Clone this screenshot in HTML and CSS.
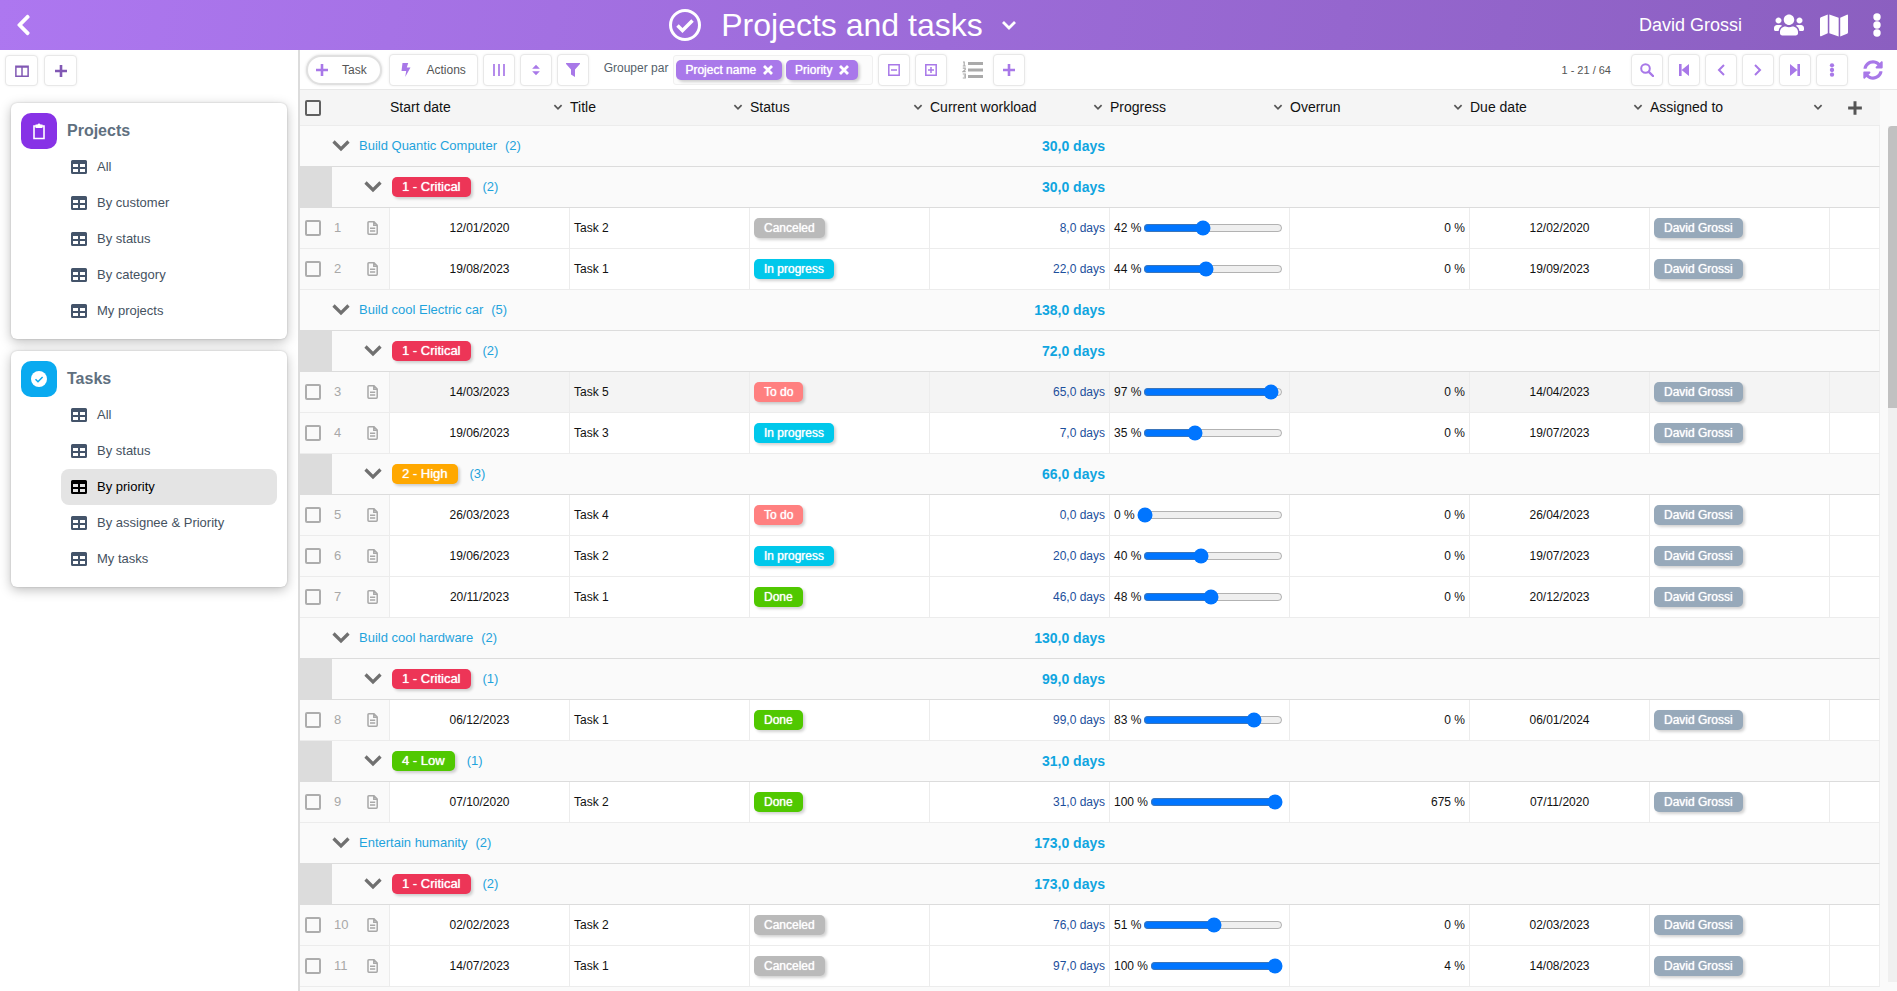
FILE: index.html
```html
<!DOCTYPE html>
<html lang="en">
<head>
<meta charset="utf-8">
<title>Projects and tasks</title>
<link rel="stylesheet" href="styles.css">
</head>
<body>
<svg class="sprite" aria-hidden="true">
  <symbol id="i-back" viewBox="0 0 320 512"><path d="M34.52 239.03L228.87 44.69c9.37-9.37 24.57-9.37 33.94 0l22.67 22.67c9.36 9.36 9.37 24.52.04 33.9L131.49 256l154.02 154.75c9.34 9.38 9.32 24.54-.04 33.9l-22.67 22.67c-9.37 9.37-24.57 9.37-33.94 0L34.52 272.97c-9.37-9.37-9.37-24.57 0-33.94z"/></symbol>
  <symbol id="i-check-circle" viewBox="0 0 32 32"><circle cx="16" cy="16" r="14.5" fill="none" stroke="currentColor" stroke-width="3"/><path d="M8.500 16.500l5 5L23.500 11.500" fill="none" stroke="currentColor" stroke-width="3.500"/></symbol>
  <symbol id="i-caret" viewBox="0 0 16 10"><path d="M2 2l6 6 6-6" fill="none" stroke="currentColor" stroke-width="2.800"/></symbol>
  <symbol id="i-users" viewBox="0 0 640 512"><path d="M96 224c35.300 0 64-28.700 64-64s-28.700-64-64-64-64 28.700-64 64 28.700 64 64 64zm448 0c35.300 0 64-28.700 64-64s-28.700-64-64-64-64 28.700-64 64 28.700 64 64 64zm32 32h-64c-17.600 0-33.500 7.100-45.100 18.600 40.300 22.100 68.900 62 75.100 109.400h66c17.700 0 32-14.300 32-32v-32c0-35.300-28.700-64-64-64zm-256 0c61.900 0 112-50.100 112-112S381.900 32 320 32 208 82.100 208 144s50.100 112 112 112zm76.800 32h-8.300c-20.800 10-43.900 16-68.500 16s-47.600-6-68.500-16h-8.300C179.600 288 128 339.600 128 403.200V432c0 26.500 21.500 48 48 48h288c26.500 0 48-21.500 48-48v-28.800c0-63.600-51.600-115.200-115.200-115.200zm-223.700-13.400C161.500 263.100 145.600 256 128 256H64c-35.300 0-64 28.700-64 64v32c0 17.700 14.300 32 32 32h65.900c6.300-47.400 34.900-87.300 75.200-109.400z"/></symbol>
  <symbol id="i-map" viewBox="0 0 576 512"><path d="M0 117.66v346.32c0 11.32 11.43 19.06 21.94 14.86L160 416V32L20.12 87.95A32 32 0 0 0 0 117.66zM192 416l192 64V96L192 32v384zM554.06 33.16L416 96v384l139.88-55.95A32 32 0 0 0 576 394.34V48.02c0-11.32-11.43-19.06-21.94-14.86z"/></symbol>
  <symbol id="i-dots" viewBox="0 0 8 24"><circle cx="4" cy="4" r="3.700"/><circle cx="4" cy="12" r="3.700"/><circle cx="4" cy="20" r="3.700"/></symbol>
  <symbol id="i-columns" viewBox="0 0 16 14"><path d="M1 1.500h14v11.500H1zM8 3v10M1 2.500h14" fill="none" stroke="currentColor" stroke-width="1.700"/></symbol>
  <symbol id="i-plus" viewBox="0 0 14 14"><path d="M7 1v12M1 7h12" fill="none" stroke="currentColor" stroke-width="2.600"/></symbol>
  <symbol id="i-clipboard" viewBox="0 0 14 18"><path d="M2 4h10v12.500H2z" fill="none" stroke="currentColor" stroke-width="1.600"/><path d="M3.500 6V2.500h2a1.600 1.600 0 0 1 3 0h2V6z"/></symbol>
  <symbol id="i-check-solid" viewBox="0 0 16 16"><circle cx="8" cy="8" r="8"/><path d="M4.500 8.200l2.500 2.500 4.600-4.800" fill="none" stroke="#0aaaf0" stroke-width="1.500"/></symbol>
  <symbol id="i-table" viewBox="0 0 16 14"><path fill-rule="evenodd" d="M1.500 0h13A1.500 1.500 0 0 1 16 1.500v11a1.500 1.500 0 0 1-1.500 1.500h-13A1.500 1.500 0 0 1 0 12.500v-11A1.500 1.500 0 0 1 1.500 0zM2 4v3h5V4zm7 0v3h5V4zM2 9v3h5V9zm7 0v3h5V9z"/></symbol>
  <symbol id="i-bolt" viewBox="0 0 10 14"><path d="M1.500 0h5.700L5.800 4.500H9.500L4.200 14 5.200 8H.5z"/></symbol>
  <symbol id="i-bars" viewBox="0 0 12 14"><path d="M1 1v12M6 1v12M11 1v12" fill="none" stroke="currentColor" stroke-width="1.700"/></symbol>
  <symbol id="i-sort" viewBox="0 0 10 14"><path d="M.5 5.500L5 .8l4.500 4.700zM.5 8.500L5 13.200l4.500-4.700z"/></symbol>
  <symbol id="i-filter" viewBox="0 0 14 14"><path d="M.5 0h13c.5 0 .7.5.4.900L9 6.500V14l-4-2.500v-5L.1.900C-.2.500 0 0 .5 0z"/></symbol>
  <symbol id="i-times" viewBox="0 0 10 10"><path d="M1 1l8 8M9 1l-8 8" fill="none" stroke="currentColor" stroke-width="2.800"/></symbol>
  <symbol id="i-minus-box" viewBox="0 0 12 12"><path d="M.8.800h10.400v10.400H.8zM3 6h6" fill="none" stroke="currentColor" stroke-width="1.500"/></symbol>
  <symbol id="i-plus-box" viewBox="0 0 12 12"><path d="M.8.800h10.400v10.400H.8zM3 6h6M6 3v6" fill="none" stroke="currentColor" stroke-width="1.500"/></symbol>
  <symbol id="i-list" viewBox="0 0 21 18"><path d="M6 2.500h15M6 9h15M6 15.500h15" fill="none" stroke="currentColor" stroke-width="2.800"/><path d="M1 1h1.200v4M.8 5h3M.8 7.200h2.400v1.500L1 10.600h2.700M.8 13h2.500v2H1.800m1.500 0v2H.8" fill="none" stroke="currentColor" stroke-width="1.200"/></symbol>
  <symbol id="i-search" viewBox="0 0 14 14"><circle cx="5.500" cy="5.500" r="4.300" fill="none" stroke="currentColor" stroke-width="2"/><path d="M8.800 8.800l4.200 4.200" stroke="currentColor" stroke-width="2.400" stroke-linecap="round"/></symbol>
  <symbol id="i-first" viewBox="0 0 10 12"><path d="M0 0h2.600v12H0zM10 0v12L2.600 6z"/></symbol>
  <symbol id="i-prev" viewBox="0 0 8 12"><path d="M7 1L2 6l5 5" fill="none" stroke="currentColor" stroke-width="2"/></symbol>
  <symbol id="i-next" viewBox="0 0 8 12"><path d="M1 1l5 5-5 5" fill="none" stroke="currentColor" stroke-width="2"/></symbol>
  <symbol id="i-last" viewBox="0 0 10 12"><path d="M7.400 0H10v12H7.400zM0 0v12L7.400 6z"/></symbol>
  <symbol id="i-sync" viewBox="0 0 512 512"><path d="M370.720 133.280C339.458 104.008 298.888 87.962 255.848 88c-77.458.068-144.328 53.178-162.791 126.850-1.344 5.363-6.122 9.150-11.651 9.150H24.103c-7.498 0-13.194-6.807-11.807-14.176C33.933 94.924 134.813 8 256 8c66.448 0 126.791 26.136 171.315 68.685L463.030 40.970C478.149 25.851 504 36.559 504 57.941V192c0 13.255-10.745 24-24 24H345.941c-21.382 0-32.090-25.851-16.971-40.971l41.750-41.749zM32 296h134.059c21.382 0 32.090 25.851 16.971 40.971l-41.750 41.750c31.262 29.273 71.835 45.319 114.876 45.280 77.418-.070 144.315-53.144 162.787-126.849 1.344-5.363 6.122-9.150 11.651-9.150h57.304c7.498 0 13.194 6.807 11.807 14.176C478.067 417.076 377.187 504 256 504c-66.448 0-126.791-26.136-171.315-68.685L48.970 471.030C33.851 486.149 8 475.441 8 454.059V320c0-13.255 10.745-24 24-24z"/></symbol>
  <symbol id="i-chevron" viewBox="0 0 18 12"><path d="M1.500 1.500L9 9l7.500-7.500" fill="none" stroke="currentColor" stroke-width="3.200"/></symbol>
  <symbol id="i-doc" viewBox="0 0 11 14"><path d="M1 1.700Q1 .8 1.900.8H7L10.200 4v8.300q0 .9-.9.900H1.900q-.9 0-.9-.9zM6.800.8v3.400h3.400M3 7.300h5.200M3 10h5.200" fill="none" stroke="currentColor" stroke-width="1.500"/></symbol>
</svg>

<header class="topbar">
  <button class="icon-btn" aria-label="Back"><svg class="back-icon"><use href="#i-back"/></svg></button>
  <h1 class="page-title">
    <svg class="title-icon"><use href="#i-check-circle"/></svg>
    <span>Projects and tasks</span>
    <button class="icon-btn" aria-label="Switch view"><svg class="title-caret"><use href="#i-caret"/></svg></button>
  </h1>
  <div class="user-area">
    <span class="user-name">David Grossi</span>
    <button class="icon-btn users-btn" aria-label="Users"><svg class="users-icon"><use href="#i-users"/></svg></button>
    <button class="icon-btn map-btn" aria-label="Map"><svg class="map-icon"><use href="#i-map"/></svg></button>
    <button class="icon-btn menu-btn" aria-label="Menu"><svg class="menu-icon"><use href="#i-dots"/></svg></button>
  </div>
</header>

<div class="layout">
  <aside class="sidebar">
    <div class="side-tools">
      <button class="tool" aria-label="Layout"><svg class="ic-14"><use href="#i-columns"/></svg></button>
      <button class="tool" aria-label="Add"><svg class="ic-14"><use href="#i-plus"/></svg></button>
    </div>
    <nav class="card">
      <h2 class="card-title"><span class="card-icon card-icon-projects"><svg class="clipboard-icon"><use href="#i-clipboard"/></svg></span>Projects</h2>
      <ul class="views">
        <li><a class="view" href="#"><svg><use href="#i-table"/></svg>All</a></li>
        <li><a class="view" href="#"><svg><use href="#i-table"/></svg>By customer</a></li>
        <li><a class="view" href="#"><svg><use href="#i-table"/></svg>By status</a></li>
        <li><a class="view" href="#"><svg><use href="#i-table"/></svg>By category</a></li>
        <li><a class="view" href="#"><svg><use href="#i-table"/></svg>My projects</a></li>
      </ul>
    </nav>
    <nav class="card">
      <h2 class="card-title"><span class="card-icon card-icon-tasks"><svg class="check-icon"><use href="#i-check-solid"/></svg></span>Tasks</h2>
      <ul class="views">
        <li><a class="view" href="#"><svg><use href="#i-table"/></svg>All</a></li>
        <li><a class="view" href="#"><svg><use href="#i-table"/></svg>By status</a></li>
        <li><a class="view is-active" href="#" aria-current="page"><svg><use href="#i-table"/></svg>By priority</a></li>
        <li><a class="view" href="#"><svg><use href="#i-table"/></svg>By assignee &amp; Priority</a></li>
        <li><a class="view" href="#"><svg><use href="#i-table"/></svg>My tasks</a></li>
      </ul>
    </nav>
  </aside>

  <main class="content">
    <div class="toolbar">
      <button class="task-btn"><svg class="ic-14"><use href="#i-plus"/></svg>Task</button>
      <button class="tool actions-btn"><svg class="bolt-icon"><use href="#i-bolt"/></svg>Actions</button>
      <button class="tool" aria-label="Columns"><svg class="ic-14"><use href="#i-bars"/></svg></button>
      <button class="tool" aria-label="Sort"><svg class="ic-12"><use href="#i-sort"/></svg></button>
      <button class="tool" aria-label="Filter"><svg class="ic-14"><use href="#i-filter"/></svg></button>
      <span class="group-label">Grouper par</span>
      <div class="tags">
        <span class="tag">Project name<button class="icon-btn" aria-label="Remove Project name"><svg class="tag-x"><use href="#i-times"/></svg></button></span>
        <span class="tag">Priority<button class="icon-btn" aria-label="Remove Priority"><svg class="tag-x"><use href="#i-times"/></svg></button></span>
      </div>
      <button class="tool" aria-label="Collapse all"><svg class="ic-12"><use href="#i-minus-box"/></svg></button>
      <button class="tool" aria-label="Expand all"><svg class="ic-12"><use href="#i-plus-box"/></svg></button>
      <button class="icon-btn list-btn" aria-label="Numbering"><svg class="list-icon"><use href="#i-list"/></svg></button>
      <button class="tool" aria-label="Add group"><svg class="ic-14"><use href="#i-plus"/></svg></button>
      <div class="pager">
        <span class="page-range">1 - 21 / 64</span>
        <button class="tool" aria-label="Search"><svg class="ic-14"><use href="#i-search"/></svg></button>
        <button class="tool" aria-label="First page"><svg class="ic-12"><use href="#i-first"/></svg></button>
        <button class="tool" aria-label="Previous page"><svg class="ic-12"><use href="#i-prev"/></svg></button>
        <button class="tool" aria-label="Next page"><svg class="ic-12"><use href="#i-next"/></svg></button>
        <button class="tool" aria-label="Last page"><svg class="ic-12"><use href="#i-last"/></svg></button>
        <button class="tool" aria-label="More"><svg class="ic-14"><use href="#i-dots"/></svg></button>
        <button class="icon-btn sync-btn" aria-label="Refresh"><svg class="sync-icon"><use href="#i-sync"/></svg></button>
      </div>
    </div>

    <div class="grid">
      <table class="tasks">
        <colgroup><col class="col-select"><col><col><col><col><col><col><col><col><col class="col-add"></colgroup>
        <thead>
          <tr>
            <th class="sel"><input class="box" type="checkbox" aria-label="Select all"></th>
            <th><div class="head">Start date<svg><use href="#i-caret"/></svg></div></th>
            <th><div class="head">Title<svg><use href="#i-caret"/></svg></div></th>
            <th><div class="head">Status<svg><use href="#i-caret"/></svg></div></th>
            <th><div class="head">Current workload<svg><use href="#i-caret"/></svg></div></th>
            <th><div class="head">Progress<svg><use href="#i-caret"/></svg></div></th>
            <th><div class="head">Overrun<svg><use href="#i-caret"/></svg></div></th>
            <th><div class="head">Due date<svg><use href="#i-caret"/></svg></div></th>
            <th><div class="head">Assigned to<svg><use href="#i-caret"/></svg></div></th>
            <th><button class="icon-btn add-col" aria-label="Add column"><svg class="add-icon"><use href="#i-plus"/></svg></button></th>
          </tr>
        </thead>
        <tbody>
          <tr class="group"><td colspan="4"><div class="group-head"><svg><use href="#i-chevron"/></svg><span class="name">Build Quantic Computer</span><span>(2)</span></div></td><td class="sum">30,0 days</td><td colspan="5"></td></tr>
          <tr class="group"><td colspan="4"><div class="group-head nested"><svg><use href="#i-chevron"/></svg><span class="badge critical">1 - Critical</span><span>(2)</span></div></td><td class="sum">30,0 days</td><td colspan="5"></td></tr>
          <tr class="task"><td class="sel"><div class="lead"><input class="box" type="checkbox" aria-label="Select row 1"><span>1</span><svg><use href="#i-doc"/></svg></div></td><td class="date">12/01/2020</td><td>Task 2</td><td><span class="badge canceled">Canceled</span></td><td class="load">8,0 days</td><td><label class="progress">42 %<input type="range" value="42"></label></td><td class="num">0 %</td><td class="date">12/02/2020</td><td><span class="badge person">David Grossi</span></td><td></td></tr>
          <tr class="task"><td class="sel"><div class="lead"><input class="box" type="checkbox" aria-label="Select row 2"><span>2</span><svg><use href="#i-doc"/></svg></div></td><td class="date">19/08/2023</td><td>Task 1</td><td><span class="badge running">In progress</span></td><td class="load">22,0 days</td><td><label class="progress">44 %<input type="range" value="44"></label></td><td class="num">0 %</td><td class="date">19/09/2023</td><td><span class="badge person">David Grossi</span></td><td></td></tr>
          <tr class="group"><td colspan="4"><div class="group-head"><svg><use href="#i-chevron"/></svg><span class="name">Build cool Electric car</span><span>(5)</span></div></td><td class="sum">138,0 days</td><td colspan="5"></td></tr>
          <tr class="group"><td colspan="4"><div class="group-head nested"><svg><use href="#i-chevron"/></svg><span class="badge critical">1 - Critical</span><span>(2)</span></div></td><td class="sum">72,0 days</td><td colspan="5"></td></tr>
          <tr class="task is-hover"><td class="sel"><div class="lead"><input class="box" type="checkbox" aria-label="Select row 3"><span>3</span><svg><use href="#i-doc"/></svg></div></td><td class="date">14/03/2023</td><td>Task 5</td><td><span class="badge todo">To do</span></td><td class="load">65,0 days</td><td><label class="progress">97 %<input type="range" value="97"></label></td><td class="num">0 %</td><td class="date">14/04/2023</td><td><span class="badge person">David Grossi</span></td><td></td></tr>
          <tr class="task"><td class="sel"><div class="lead"><input class="box" type="checkbox" aria-label="Select row 4"><span>4</span><svg><use href="#i-doc"/></svg></div></td><td class="date">19/06/2023</td><td>Task 3</td><td><span class="badge running">In progress</span></td><td class="load">7,0 days</td><td><label class="progress">35 %<input type="range" value="35"></label></td><td class="num">0 %</td><td class="date">19/07/2023</td><td><span class="badge person">David Grossi</span></td><td></td></tr>
          <tr class="group"><td colspan="4"><div class="group-head nested"><svg><use href="#i-chevron"/></svg><span class="badge high">2 - High</span><span>(3)</span></div></td><td class="sum">66,0 days</td><td colspan="5"></td></tr>
          <tr class="task"><td class="sel"><div class="lead"><input class="box" type="checkbox" aria-label="Select row 5"><span>5</span><svg><use href="#i-doc"/></svg></div></td><td class="date">26/03/2023</td><td>Task 4</td><td><span class="badge todo">To do</span></td><td class="load">0,0 days</td><td><label class="progress">0 %<input type="range" value="0"></label></td><td class="num">0 %</td><td class="date">26/04/2023</td><td><span class="badge person">David Grossi</span></td><td></td></tr>
          <tr class="task"><td class="sel"><div class="lead"><input class="box" type="checkbox" aria-label="Select row 6"><span>6</span><svg><use href="#i-doc"/></svg></div></td><td class="date">19/06/2023</td><td>Task 2</td><td><span class="badge running">In progress</span></td><td class="load">20,0 days</td><td><label class="progress">40 %<input type="range" value="40"></label></td><td class="num">0 %</td><td class="date">19/07/2023</td><td><span class="badge person">David Grossi</span></td><td></td></tr>
          <tr class="task"><td class="sel"><div class="lead"><input class="box" type="checkbox" aria-label="Select row 7"><span>7</span><svg><use href="#i-doc"/></svg></div></td><td class="date">20/11/2023</td><td>Task 1</td><td><span class="badge done">Done</span></td><td class="load">46,0 days</td><td><label class="progress">48 %<input type="range" value="48"></label></td><td class="num">0 %</td><td class="date">20/12/2023</td><td><span class="badge person">David Grossi</span></td><td></td></tr>
          <tr class="group"><td colspan="4"><div class="group-head"><svg><use href="#i-chevron"/></svg><span class="name">Build cool hardware</span><span>(2)</span></div></td><td class="sum">130,0 days</td><td colspan="5"></td></tr>
          <tr class="group"><td colspan="4"><div class="group-head nested"><svg><use href="#i-chevron"/></svg><span class="badge critical">1 - Critical</span><span>(1)</span></div></td><td class="sum">99,0 days</td><td colspan="5"></td></tr>
          <tr class="task"><td class="sel"><div class="lead"><input class="box" type="checkbox" aria-label="Select row 8"><span>8</span><svg><use href="#i-doc"/></svg></div></td><td class="date">06/12/2023</td><td>Task 1</td><td><span class="badge done">Done</span></td><td class="load">99,0 days</td><td><label class="progress">83 %<input type="range" value="83"></label></td><td class="num">0 %</td><td class="date">06/01/2024</td><td><span class="badge person">David Grossi</span></td><td></td></tr>
          <tr class="group"><td colspan="4"><div class="group-head nested"><svg><use href="#i-chevron"/></svg><span class="badge done">4 - Low</span><span>(1)</span></div></td><td class="sum">31,0 days</td><td colspan="5"></td></tr>
          <tr class="task"><td class="sel"><div class="lead"><input class="box" type="checkbox" aria-label="Select row 9"><span>9</span><svg><use href="#i-doc"/></svg></div></td><td class="date">07/10/2020</td><td>Task 2</td><td><span class="badge done">Done</span></td><td class="load">31,0 days</td><td><label class="progress">100 %<input type="range" value="100"></label></td><td class="num">675 %</td><td class="date">07/11/2020</td><td><span class="badge person">David Grossi</span></td><td></td></tr>
          <tr class="group"><td colspan="4"><div class="group-head"><svg><use href="#i-chevron"/></svg><span class="name">Entertain humanity</span><span>(2)</span></div></td><td class="sum">173,0 days</td><td colspan="5"></td></tr>
          <tr class="group"><td colspan="4"><div class="group-head nested"><svg><use href="#i-chevron"/></svg><span class="badge critical">1 - Critical</span><span>(2)</span></div></td><td class="sum">173,0 days</td><td colspan="5"></td></tr>
          <tr class="task"><td class="sel"><div class="lead"><input class="box" type="checkbox" aria-label="Select row 10"><span>10</span><svg><use href="#i-doc"/></svg></div></td><td class="date">02/02/2023</td><td>Task 2</td><td><span class="badge canceled">Canceled</span></td><td class="load">76,0 days</td><td><label class="progress">51 %<input type="range" value="51"></label></td><td class="num">0 %</td><td class="date">02/03/2023</td><td><span class="badge person">David Grossi</span></td><td></td></tr>
          <tr class="task"><td class="sel"><div class="lead"><input class="box" type="checkbox" aria-label="Select row 11"><span>11</span><svg><use href="#i-doc"/></svg></div></td><td class="date">14/07/2023</td><td>Task 1</td><td><span class="badge canceled">Canceled</span></td><td class="load">97,0 days</td><td><label class="progress">100 %<input type="range" value="100"></label></td><td class="num">4 %</td><td class="date">14/08/2023</td><td><span class="badge person">David Grossi</span></td><td></td></tr>
        </tbody>
      </table>
      <div class="scroll-track"><div class="scroll-thumb"></div></div>
    </div>
  </main>
</div>
</body>
</html>
```
FILE: styles.css
```css
* { box-sizing: border-box; }

body {
  margin: 0;
  height: 100vh;
  display: flex;
  flex-direction: column;
  overflow: hidden;
  background: #fff;
  color: #111;
  font: 12px/16px "Liberation Sans", Arial, sans-serif;
}

svg { display: block; flex: none; fill: currentColor; }
.sprite { position: absolute; width: 0; height: 0; }
button { font: inherit; color: inherit; }
.icon-btn { display: flex; padding: 0; border: 0; background: none; }
.ic-14 { width: 14px; height: 14px; }
.ic-12 { width: 12px; height: 12px; }

/* Top bar */
.topbar {
  flex: none;
  display: flex;
  align-items: center;
  height: 50px;
  padding: 0 16px;
  background: linear-gradient(100deg, #ad77f0, #8b5fc0);
  color: #fff;
}
.back-icon { width: 15px; height: 24px; }
.page-title {
  flex: 1;
  display: flex;
  align-items: center;
  justify-content: center;
  margin: 0;
  padding-left: 16px;
  font-size: 32px;
  font-weight: 400;
  line-height: 40px;
}
.title-icon { width: 32px; height: 32px; margin-right: 20px; }
.title-caret { width: 16px; height: 10px; margin-left: 18px; }
.user-area { display: flex; align-items: center; justify-content: flex-end; }
.user-name { font-size: 18px; line-height: 24px; }
.users-btn { margin-left: 32px; }
.map-btn { margin-left: 16px; }
.menu-btn { margin-left: 25px; }
.users-icon { width: 30px; height: 24px; }
.map-icon { width: 28px; height: 25px; }
.menu-icon { width: 8px; height: 24px; }

.layout { flex: 1; display: flex; min-height: 0; }

/* Sidebar */
.sidebar {
  flex: none;
  width: 300px;
  border-right: 2px solid #dcdcdc;
  overflow: hidden;
}
.side-tools { display: flex; gap: 6px; padding: 5px; color: #8158b4; }
.tool {
  display: flex;
  align-items: center;
  justify-content: center;
  width: 32px;
  height: 32px;
  padding: 0;
  border: 1px solid #e8e8e8;
  border-radius: 4px;
  background: #fff;
  box-shadow: 0 0 3px rgba(0, 0, 0, .06);
}
.side-tools .tool { width: 33px; height: 31px; }
.card {
  margin: 12px 11px 0;
  padding: 10px;
  border-radius: 6px;
  background: #fff;
  box-shadow: 0 3px 12px rgba(0, 0, 0, .26), 0 0 2px rgba(0, 0, 0, .2);
}
.card-title {
  display: flex;
  align-items: center;
  gap: 10px;
  margin: 0;
  color: #5f7080;
  font-size: 16px;
  line-height: 20px;
}
.card-icon {
  display: flex;
  align-items: center;
  justify-content: center;
  width: 36px;
  height: 36px;
  border-radius: 10px;
  color: #fff;
}
.card-icon-projects { background: #8732e6; }
.card-icon-tasks { background: #0aaaf0; }
.clipboard-icon { width: 14px; height: 18px; }
.check-icon { width: 16px; height: 16px; }
.views { margin: 0; padding: 0 0 0 40px; list-style: none; }
.view {
  display: flex;
  align-items: center;
  gap: 10px;
  height: 36px;
  padding: 0 10px;
  border-radius: 8px;
  color: #45525f;
  font-size: 13px;
  text-decoration: none;
}
.view svg { width: 16px; height: 14px; color: #44546a; }
.view.is-active { background: #e4e4e4; color: #000; }
.view.is-active svg { color: #000; }

/* Toolbar */
.content { flex: 1; min-width: 0; display: flex; flex-direction: column; }
.toolbar {
  flex: none;
  display: flex;
  align-items: center;
  gap: 5px;
  height: 40px;
  padding: 0 14px 0 6px;
  border-bottom: 1px solid #e8e8e8;
  color: #a878e8;
}
.task-btn {
  display: flex;
  align-items: center;
  gap: 13px;
  height: 30px;
  margin-right: 2px;
  padding: 0 13px 0 7px;
  border: 2px solid #e0e0e0;
  border-radius: 15px;
  background: #fff;
  box-shadow: 0 0 3px rgba(0, 0, 0, .15);
}
.task-btn, .actions-btn { line-height: 16px; }
.task-btn, .tool.actions-btn { color: #555; }
.task-btn svg, .actions-btn svg { color: #a878e8; }
.tool.actions-btn { width: 89px; gap: 16px; }
.bolt-icon { width: 10px; height: 14px; }
.group-label { margin: 0 0 4px 10px; color: #555f6a; }
.tags {
  display: flex;
  align-items: center;
  gap: 4px;
  width: 200px;
  height: 30px;
  padding: 0 2px;
  border: 1px solid #f0f0f0;
  border-radius: 3px;
  background: #fcfcfc;
}
.tag {
  display: flex;
  align-items: center;
  gap: 7px;
  height: 20px;
  padding: 0 9px;
  border-radius: 5px;
  background: #a978ea;
  box-shadow: 2px 2px 3px rgba(0, 0, 0, .18);
  color: #fff;
  text-shadow: 0 0 1px #fff;
  white-space: nowrap;
}
.tag-x { width: 10px; height: 10px; }
.list-btn { margin: 0 5px 0 10px; color: #aaa; }
.list-icon { width: 21px; height: 18px; }
.pager { display: flex; align-items: center; gap: 5px; margin-left: auto; }
.page-range { margin-right: 15px; color: #555; font-size: 11px; }
.sync-btn { margin-left: 10px; }
.sync-icon { width: 20px; height: 20px; }

/* Task table */
.grid { flex: 1; display: flex; min-height: 0; overflow: hidden; background: #fafafa; }
.tasks {
  flex: 1;
  align-self: flex-start;
  width: 100%;
  border-collapse: separate;
  border-spacing: 0;
  table-layout: fixed;
}
.col-select { width: 90px; }
.col-add { width: 50px; }
.tasks th {
  height: 36px;
  padding: 0;
  border-bottom: 1px solid #ececec;
  background: #f5f5f5;
  font-size: 14px;
  font-weight: 400;
  text-align: left;
}
.tasks th.sel { padding-left: 5px; }
.head { display: flex; align-items: center; justify-content: space-between; padding: 0 7px 2px 0; white-space: nowrap; }
.head svg { width: 10px; height: 6px; color: #555; }
.add-col { margin-left: 17px; color: #555; }
.add-icon { width: 16px; height: 16px; }
.tasks td { height: 41px; padding: 0 4px; white-space: nowrap; }
.tasks .group td { padding: 0; border-bottom: 1px solid #dcdcdc; background: #fafafa; }
.tasks .group .sum { padding-right: 5px; color: #0fa5e0; font-size: 14px; font-weight: 700; text-align: right; }
.group td:last-child, .task td:last-child { border-right: 1px solid #eee; }
.group-head {
  display: flex;
  align-items: center;
  gap: 8px;
  height: 40px;
  padding-left: 32px;
  color: #1fa3dc;
  font-size: 13px;
}
.group-head svg { width: 18px; height: 12px; margin: 0 1px 1px 0; color: #707070; }
.group-head.nested { border-left: 32px solid #dcdcdc; }
.group-head .badge { font-size: 13px; margin: 0 4px 0 1px; }
.task td { border-right: 1px solid #ececec; border-bottom: 1px solid #ececec; background: #fff; }
.task.is-hover td { background: #f4f4f4; }
.tasks .task td.sel { padding: 0 0 0 5px; background: #fafafa; }
.task .date { text-align: center; }
.task .num { text-align: right; }
.task .load { color: #1c4f9c; text-align: right; }
.lead { display: grid; grid-template-columns: 29px 33px 11px; align-items: center; color: #a8a8a8; font-size: 13px; }
.lead svg { width: 11px; height: 14px; }
.box {
  appearance: none;
  display: block;
  width: 16px;
  height: 16px;
  margin: 0;
  border: 2px solid #adadad;
  border-radius: 2px;
  background: transparent;
}
th .box { border-color: #606060; }
.badge {
  display: inline-block;
  height: 20px;
  padding: 0 10px;
  border-radius: 5px;
  box-shadow: 2px 2px 3px rgba(0, 0, 0, .18);
  color: #fff;
  line-height: 20px;
  text-shadow: 0 0 1px #fff;
}
.critical { background: #ed3557; }
.high { background: #ffa800; }
.done { background: #50c800; }
.todo { background: #ff8080; }
.running { background: #00c8eb; }
.canceled { background: #bababa; }
.person { background: #97a9ba; }
.progress { display: flex; align-items: center; }
.progress input { flex: 1; min-width: 0; height: 16px; margin: 2px; accent-color: #0075ff; }

.scroll-track { flex: none; width: 9px; margin: 36px 0 9px 8px; background: #f0f0f0; }
.scroll-thumb { width: 9px; height: 33%; border-radius: 4px 0 0 0; background: #c1c1c1; }
```
